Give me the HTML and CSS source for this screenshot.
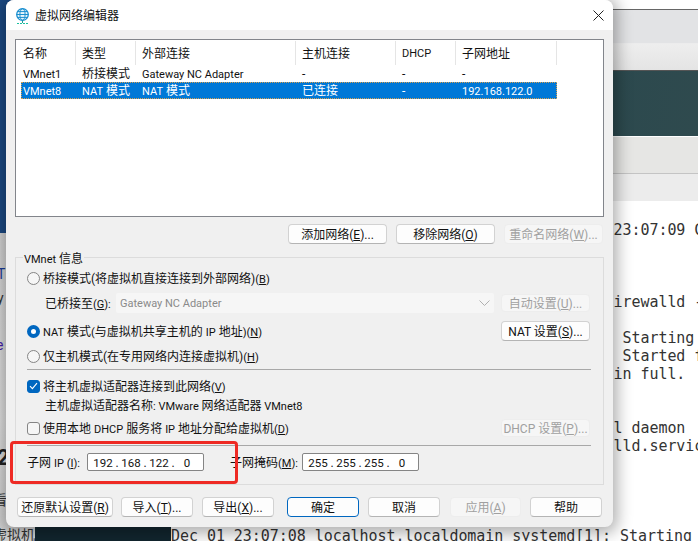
FILE: index.html
```html
<!DOCTYPE html>
<html lang="zh-CN">
<head>
<meta charset="utf-8">
<title>虚拟网络编辑器</title>
<link rel="stylesheet" href="styles.css">
</head>
<body>
<div class="desktop">
  <aside class="side">
    <div class="side-blue"></div>
    <div class="side-rest">
      <span class="frag link f-t">T</span>
      <span class="frag f-y">y</span>
      <span class="frag visited f-e">e</span>
      <span class="frag big f-2">2</span>
      <span class="frag f-k">看</span>
      <span class="frag f-x">虚拟机</span>
    </div>
  </aside>
  <div class="dark-col"></div>
  <main class="app">
    <div class="band band-a"></div>
    <div class="band band-b"></div>
    <div class="band band-teal"></div>
    <div class="band band-c"></div>
    <div class="band band-d"></div>
    <pre class="term"><span class="c49">23:07:09 CST</span>



<span class="c49">irewalld - dynamic</span>

<span class="c49"> Starting firewalld</span>
<span class="c49"> Started firewalld</span>
<span class="c49">in full.</span>


<span class="c49">l daemon</span>
<span class="c49">lld.service</span>




Dec 01 23:07:08 localhost.localdomain systemd[1]: Starting</pre>
  </main>

  <section class="dialog">
    <header class="titlebar">
      <svg class="globe" width="13" height="16" viewBox="0 0 13 16" aria-hidden="true">
        <circle cx="6.5" cy="6.5" r="5.8" fill="#e8f6fb" stroke="#1b8fd0" stroke-width="1.3"/>
        <ellipse cx="6.5" cy="6.5" rx="2.6" ry="5.8" fill="none" stroke="#1b8fd0"/>
        <path d="M.7 6.5h11.6M1.6 3.6h9.8M1.6 9.4h9.8" stroke="#1b8fd0" fill="none"/>
        <path d="M6.5 12.5v2.5" stroke="#1f9e8a"/>
        <path d="M1 15.5h11" stroke="#19c0a0" stroke-dasharray="2 1"/>
      </svg>
      <span class="title">虚拟网络编辑器</span>
      <svg class="close" width="11" height="11" viewBox="0 0 11 11" aria-hidden="true">
        <path d="M.5.5l10 10M10.5.5l-10 10" stroke="#222" fill="none"/>
      </svg>
    </header>

    <div class="body">
      <div class="list">
        <div class="row head">
          <span class="cell">名称</span><span class="cell">类型</span><span class="cell">外部连接</span><span class="cell">主机连接</span><span class="cell lat">DHCP</span><span class="cell">子网地址</span>
        </div>
        <div class="row item">
          <span class="cell lat">VMnet1</span><span class="cell">桥接模式</span><span class="cell lat">Gateway NC Adapter</span><span class="cell">-</span><span class="cell">-</span><span class="cell">-</span>
        </div>
        <div class="row item selected">
          <span class="cell lat">VMnet8</span><span class="cell"><span class="lat">NAT</span> 模式</span><span class="cell"><span class="lat">NAT</span> 模式</span><span class="cell">已连接</span><span class="cell">-</span><span class="cell lat">192.168.122.0</span>
        </div>
      </div>

      <div class="list-actions">
        <button class="btn w99">添加网络(<u>E</u>)...</button>
        <button class="btn w99">移除网络(<u>O</u>)</button>
        <button class="btn w99 off">重命名网络(<u>W</u>)...</button>
      </div>

      <div class="group">
        <span class="legend"><span class="lat">VMnet</span> 信息</span>
        <label class="line r-bridge"><span class="radio"></span><span>桥接模式(将虚拟机直接连接到外部网络)<span class="lat">(<u>B</u>)</span></span></label>
        <div class="line r-to">
          <span class="to-label">已桥接至<span class="lat">(<u>G</u>):</span></span>
          <div class="select lat">Gateway NC Adapter
            <svg class="chev" width="11" height="6" viewBox="0 0 11 6" aria-hidden="true"><path d="M.5.5l5 5 5-5" fill="none" stroke="#b0b0b0"/></svg>
          </div>
          <button class="btn w89 h18 off">自动设置(<u>U</u>)...</button>
        </div>
        <div class="line between r-nat">
          <label class="line"><span class="radio on"></span><span><span class="lat">NAT</span> 模式<span class="lat">(</span>与虚拟机共享主机的 <span class="lat">IP</span> 地址<span class="lat">)(<u>N</u>)</span></span></label>
          <button class="btn w89">NAT 设置(<u>S</u>)...</button>
        </div>
        <label class="line r-host"><span class="radio"></span><span>仅主机模式(在专用网络内连接虚拟机)<span class="lat">(<u>H</u>)</span></span></label>
        <div class="rule r-1"></div>
        <label class="line r-check"><span class="check on"><svg width="9" height="8" viewBox="0 0 9 8" aria-hidden="true"><path d="M1 4.2l2.4 2.4L8 1.2" fill="none" stroke="#fff" stroke-width="1.1"/></svg></span><span>将主机虚拟适配器连接到此网络<span class="lat">(<u>V</u>)</span></span></label>
        <div class="line r-name"><span>主机虚拟适配器名称<span class="lat">: VMware </span>网络适配器<span class="lat"> VMnet8</span></span></div>
        <div class="line between r-dhcp">
          <label class="line"><span class="check"></span><span>使用本地 <span class="lat">DHCP</span> 服务将 <span class="lat">IP</span> 地址分配给虚拟机<span class="lat">(<u>D</u>)</span></span></label>
          <button class="btn w89 h18 off">DHCP 设置(<u>P</u>)...</button>
        </div>
        <div class="rule r-2"></div>
        <div class="line r-subnet">
          <span class="ip-label">子网 <span class="lat">IP (<u>I</u>):</span></span>
          <div class="ip"><span class="oct">192</span><span class="dot">.</span><span class="oct">168</span><span class="dot">.</span><span class="oct">122</span><span class="dot">.</span><span class="oct">0</span></div>
          <span class="mask-label">子网掩码<span class="lat">(<u>M</u>):</span></span>
          <div class="ip"><span class="oct">255</span><span class="dot">.</span><span class="oct">255</span><span class="dot">.</span><span class="oct">255</span><span class="dot">.</span><span class="oct">0</span></div>
        </div>
      </div>

      <footer class="footer">
        <button class="btn w96">还原默认设置(<u>R</u>)</button>
        <button class="btn w72 g8">导入(<u>T</u>)...</button>
        <button class="btn w72 g9">导出(<u>X</u>)...</button>
        <button class="btn w72 g13 primary">确定</button>
        <button class="btn w72 g9">取消</button>
        <button class="btn w71 g10 off">应用(<u>A</u>)</button>
        <button class="btn w72 g9">帮助</button>
      </footer>
    </div>
    <div class="highlight"></div>
  </section>
</div>
</body>
</html>
```
FILE: styles.css
```css
* { box-sizing: border-box; }
html, body { margin: 0; height: 100%; }
body { overflow: hidden; }

.desktop {
  position: relative;
  width: 698px;
  height: 541px;
  display: grid;
  grid-template-columns: 35px 136px 1fr;
  overflow: hidden;
  font: 12px/16px Roboto, "Noto Sans CJK SC", sans-serif;
  color: #111;
  background: #fff;
}
.lat { font-size: 11px; }

/* left strip of the window behind */
.side { display: flex; flex-direction: column; height: 541px; }
.side-blue { height: 233px; background: #1c4b86; }
.side-rest { position: relative; flex: 1; background: linear-gradient(#d9d9d9, #e6e6e6 60%, #d4d4d4); }
.frag { position: absolute; left: -2px; font-size: 14px; line-height: 18px; }
.link { color: #1a3d9c; left: -3px; top: 32px; }
.f-y { top: 56px; left: -3px; color: #333; }
.visited { color: #4a1fb0; top: 103px; left: -4px; }
.big { top: 213px; left: -3px; font-size: 22px; line-height: 24px; font-weight: 700; color: #222; }
.f-k { top: 258px; left: -7px; color: #333; }
.f-x { top: 293px; left: -7px; font-size: 14px; color: #333; white-space: nowrap; }
.side-rest .f-t { top: 32px; }

.dark-col { background: #12262f; }

/* terminal window behind */
.app { display: flex; flex-direction: column; height: 541px; overflow: hidden; }
.band { flex: none; }
.band-a { height: 10px; background: #fff; border-bottom: 1px solid #666; }
.band-b { height: 60px; background: linear-gradient(#e2e3e5 0, #e2e3e5 55%, #eeeeee 56%, #e4e4e4 100%); }
.band-teal { height: 67px; background: linear-gradient(100deg, #1e4650, #2f4a4e); border-top: 1px solid #555; border-bottom: 1px solid #fff; }
.band-c { height: 37px; background: #e6e6e4; border-bottom: 1px solid #c4c4c4; }
.band-d { height: 27px; background: #ececec; }
.term {
  margin: 0;
  padding: 20px 0 0;
  font: 15px/18px "DejaVu Sans Mono", monospace;
  letter-spacing: -.05px;
  color: #333;
  white-space: pre;
  background: #fff;
}
.c49 { padding-left: 49ch; }

/* dialog window */
.dialog {
  position: absolute;
  left: 6px;
  top: 0;
  width: 607px;
  height: 527px;
  border-radius: 8px;
  overflow: visible;
  background: #f0f0f0;
  box-shadow: 0 2px 16px 4px rgba(0, 0, 0, .33);
}
.titlebar {
  height: 30px;
  display: flex;
  align-items: center;
  padding: 0 9px 0 10px;
  background: #fff;
  border-radius: 8px 8px 0 0;
}
.globe { flex: none; margin-top: 1px; }
.title { margin-left: 6px; flex: 1; padding-top: 1px; }
.close { flex: none; }

.body { padding: 9px 9px 0; }

.list {
  height: 178px;
  background: #fff;
  border: 1px solid #82858b;
  padding: 1px 0 0 5px;
}
.row { display: grid; grid-template-columns: 55px 60px 160px 100px 60px 101px; width: 536px; }
.cell { padding-left: 6px; white-space: nowrap; overflow: hidden; }
.cell:first-child { padding-left: 2px; }
.head { height: 24px; }
.head .cell { line-height: 26px; border-right: 1px solid #e5e5e5; }
.item { height: 17px; }
.item .cell { height: 17px; line-height: 19px; }
.selected { background: #0078d7; color: #fff; outline: 1px dotted #d8a050; outline-offset: -1px; }

.list-actions { display: flex; justify-content: flex-end; gap: 9px; margin: 7px 1px 0 0; height: 20px; }

.btn {
  flex: none;
  height: 20px;
  padding: 1px 0 0;
  font: inherit;
  line-height: 16px;
  color: #111;
  background: #fdfdfd;
  border: 1px solid #d2d2d2;
  border-bottom-color: #b4b4b4;
  border-radius: 4px;
  white-space: nowrap;
}
.btn.off { color: #a0a0a0; background: #f6f6f6; border-color: #ededed; }
.btn.primary { border-color: #0067c0; }
.w99 { width: 99px; }
.w96 { width: 96px; }
.w89 { width: 89px; }
.w72 { width: 72px; }
.w71 { width: 71px; }
.h18 { height: 18px; }
.g8 { margin-left: 8px; }
.g9 { margin-left: 9px; }
.g10 { margin-left: 10px; }
.g13 { margin-left: 13px; }

.group {
  position: relative;
  height: 228px;
  margin-top: 13px;
  padding: 11px 12px 0 11px;
  border: 1px solid #dcdcdc;
}
.legend {
  position: absolute;
  left: 7px;
  top: -7px;
  padding: 0 1px;
  background: #f0f0f0;
}
.line { display: flex; align-items: center; white-space: nowrap; padding-top: 2px; }
.line .radio, .line .check, .line .btn, .line .select, .line .ip { margin-top: -2px; }
.line.between { justify-content: space-between; padding: 0 1px 0 0; }
.between > .btn { margin-top: 0; }
.between > label { height: 100%; }
.r-bridge { height: 18px; }
.r-to { height: 20px; margin-top: 6px; padding-left: 18px; }
.r-nat { height: 20px; margin-top: 8px; }
.r-host { height: 18px; margin-top: 6px; }
.r-1 { margin-top: 4px; }
.r-check { height: 18px; margin-top: 7px; }
.r-name { height: 18px; margin-top: 1px; padding-left: 18px; }
.r-dhcp { height: 18px; margin-top: 5px; }
.r-2 { margin-top: 8px; }
.r-subnet { height: 18px; margin-top: 7px; }

.rule { height: 1px; background: #a8a8a8; }

.radio {
  flex: none;
  width: 13px;
  height: 13px;
  margin-right: 3px;
  border: 1px solid #858585;
  border-radius: 50%;
  background: #f6f6f6;
}
.radio.on { border: 4px solid #0067c0; background: #fff; }
.check {
  flex: none;
  width: 13px;
  height: 13px;
  margin-right: 3px;
  border: 1px solid #858585;
  border-radius: 3px;
  background: #f6f6f6;
  display: flex;
  align-items: center;
  justify-content: center;
}
.check.on { background: #0067c0; border-color: #0067c0; }

.to-label { width: 71px; flex: none; }
.select {
  position: relative;
  flex: none;
  width: 378px;
  height: 20px;
  margin-right: 7px;
  padding-left: 4px;
  line-height: 21px;
  color: #8a8a8a;
  background: #f6f6f6;
  border-radius: 2px;
}
.chev { position: absolute; right: 4px; top: 7px; }

.ip-label { width: 60px; flex: none; }
.mask-label { width: 72px; flex: none; margin-left: 26px; }
.ip {
  flex: none;
  width: 117px;
  height: 18px;
  display: flex;
  padding: 1px 0 0 4px;
  line-height: 16px;
  background: #fff;
  border: 1px solid #858585;
  border-radius: 2px;
}
.oct { width: 22px; text-align: center; font-size: 11.5px; }
.dot { width: 6px; text-align: center; }

.footer { display: flex; margin: 12px 0 0 2px; }

.highlight {
  position: absolute;
  left: 4px;
  top: 441px;
  width: 228px;
  height: 43px;
  border: 3px solid #ee2a24;
  border-radius: 4px;
}
```
